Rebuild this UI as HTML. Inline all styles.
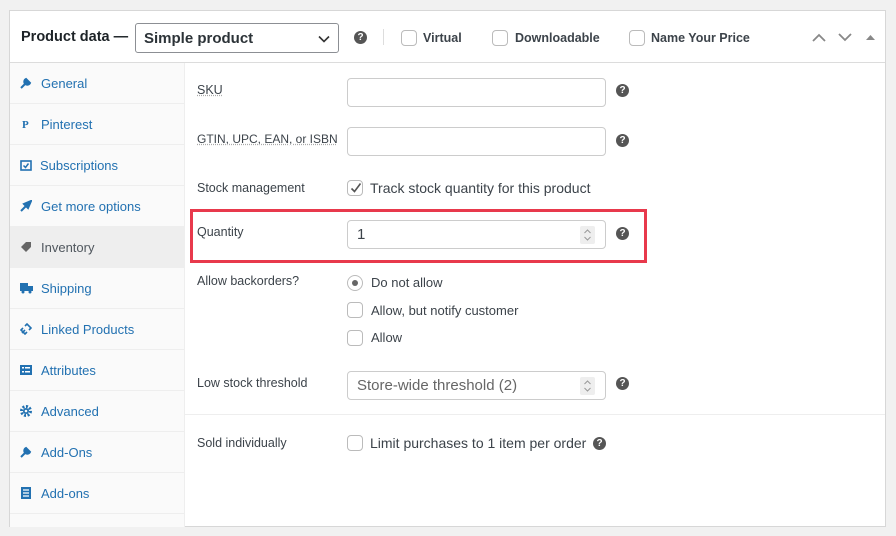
<!DOCTYPE html>
<html><head><style>
*{box-sizing:border-box;margin:0;padding:0}
body{width:896px;height:536px;background:#f1f1f1;font-family:"Liberation Sans",sans-serif;position:relative;overflow:hidden;color:#3c434a}
.panel{position:absolute;left:9px;top:10px;width:877px;height:517px;background:#fff;border:1px solid #d7d7d7}
.hdr{position:absolute;left:0;top:0;width:100%;height:52px;border-bottom:1px solid #dcdcdc}
.abs{position:absolute}
.side{position:absolute;left:0;top:52px;width:175px;height:464px;background:#fafafa;border-right:1px solid #eee}
.tab{position:absolute;left:0;width:174px;height:41px;border-bottom:1px solid #eee;color:#2271b1;font-size:13px;line-height:41px;padding-left:31px}
.tab.act{background:#eee;color:#50575e}
.tab svg{position:absolute;left:10px;top:14px}
.lbl{position:absolute;left:197px;font-size:12.5px;color:#3c434a}
.inp{position:absolute;left:347px;width:259px;height:29px;border:1px solid #ccc;border-radius:4px;background:#fff;font-size:15px;line-height:27px;padding-left:9px}
.q{position:absolute;width:13px;height:13px;border-radius:50%;background:#555;color:#fff;font-size:10px;font-weight:bold;text-align:center;line-height:13px}
.cb{position:absolute;width:16px;height:16px;border:1px solid #bbb;border-radius:4px;background:#fff}
.ct{position:absolute;font-size:14px;color:#3c434a}
.spin{position:absolute;right:10px;top:5px;width:15px;height:18px;background:#eee;border-radius:2px}
</style></head><body>
<div class="panel">
 <div class="hdr">
  <div class="abs" style="left:11px;top:18px;font-size:14.5px;font-weight:bold;color:#1d2327">Product data —</div>
  <div class="abs" style="left:125px;top:12px;width:204px;height:30px;border:1px solid #8c8f94;border-radius:3px;font-size:15px;line-height:29px;padding-left:8px;color:#2c3338;font-weight:bold;-webkit-text-stroke:0">Simple product
   <svg class="abs" style="right:8px;top:11px" width="12" height="8"><path d="M1 1.5l5 5 5-5" stroke="#333" stroke-width="1.6" fill="none"/></svg></div>
  <div class="q" style="left:344px;top:20px">?</div>
  <div class="abs" style="left:373px;top:18px;width:1px;height:16px;background:#ddd"></div>
  <div class="cb" style="left:391px;top:19px"></div><div class="ct" style="left:413px;top:20px;font-weight:bold;font-size:12.5px">Virtual</div>
  <div class="cb" style="left:482px;top:19px"></div><div class="ct" style="left:505px;top:20px;font-weight:bold;font-size:12.5px">Downloadable</div>
  <div class="cb" style="left:619px;top:19px"></div><div class="ct" style="left:641px;top:20px;font-weight:bold;font-size:12.5px">Name Your Price</div>
  <svg class="abs" style="left:802px;top:22px" width="14" height="9"><path d="M1 8l6-6 6 6" stroke="#888" stroke-width="1.8" fill="none"/></svg>
  <svg class="abs" style="left:828px;top:22px" width="14" height="9"><path d="M1 1l6 6 6-6" stroke="#888" stroke-width="1.8" fill="none"/></svg>
  <svg class="abs" style="left:856px;top:23px" width="9" height="6"><path d="M0 6l4.5-5 4.5 5z" fill="#888"/></svg>
 </div>
 <div class="side">
  <div class="tab" style="top:0"><svg width="12" height="12"><path d="M1 11l6-6M6 2a3 3 0 104 4l-2-2z" stroke="#2271b1" stroke-width="2" fill="#2271b1"/></svg>General</div>
  <div class="tab" style="top:41px"><svg width="12" height="12"><text x="2" y="10" font-size="11" font-weight="bold" fill="#2271b1" font-family="Liberation Serif">P</text></svg>Pinterest</div>
  <div class="tab" style="top:82px;padding-left:30px"><svg width="12" height="12"><rect x="1" y="2" width="10" height="9" stroke="#2271b1" stroke-width="1.6" fill="none"/><path d="M3.5 6.5l2 2 3-4" stroke="#2271b1" stroke-width="1.5" fill="none"/></svg>Subscriptions</div>
  <div class="tab" style="top:123px"><svg width="12" height="12"><path d="M1 11l5-5M4 4l4 4 3-7z" stroke="#2271b1" stroke-width="2" fill="#2271b1"/></svg>Get more options</div>
  <div class="tab act" style="top:164px"><svg width="12" height="12"><path d="M1 6l5-5h5v5l-5 5z" fill="#666"/></svg>Inventory</div>
  <div class="tab" style="top:205px"><svg width="13" height="12"><rect x="0" y="1" width="8" height="8" fill="#2271b1"/><rect x="8" y="4" width="5" height="5" fill="#2271b1"/><circle cx="3" cy="10" r="1.5" fill="#2271b1"/><circle cx="10" cy="10" r="1.5" fill="#2271b1"/></svg>Shipping</div>
  <div class="tab" style="top:246px"><svg width="12" height="12"><path d="M2 10l3-3M5 3l2-2 4 4-2 2M3 5L1 7l4 4 2-2" stroke="#2271b1" stroke-width="1.6" fill="none"/></svg>Linked Products</div>
  <div class="tab" style="top:287px"><svg width="12" height="12"><rect x="0" y="1" width="12" height="10" fill="#2271b1"/><rect x="2" y="3" width="2" height="1.5" fill="#fff"/><rect x="5" y="3" width="5" height="1.5" fill="#fff"/><rect x="2" y="7" width="2" height="1.5" fill="#fff"/><rect x="5" y="7" width="5" height="1.5" fill="#fff"/></svg>Attributes</div>
  <div class="tab" style="top:328px"><svg width="12" height="12"><circle cx="6" cy="6" r="4.5" stroke="#2271b1" stroke-width="3" stroke-dasharray="2 1.5" fill="none"/><circle cx="6" cy="6" r="3" fill="#2271b1"/><circle cx="6" cy="6" r="1.3" fill="#fafafa"/></svg>Advanced</div>
  <div class="tab" style="top:369px"><svg width="12" height="12"><path d="M1 11l6-6M6 2a3 3 0 104 4l-2-2z" stroke="#2271b1" stroke-width="2" fill="#2271b1"/></svg>Add-Ons</div>
  <div class="tab" style="top:410px"><svg width="12" height="12"><rect x="1" y="0" width="10" height="12" fill="#2271b1"/><path d="M3 3h6M3 6h6M3 9h6" stroke="#fff" stroke-width="1.2"/></svg>Add-ons</div>
 </div>
</div>
<div class="lbl" style="top:83px;text-decoration:underline dotted;text-decoration-color:#aaa">SKU</div>
<div class="inp" style="top:78px"></div><div class="q" style="left:616px;top:84px">?</div>
<div class="lbl" style="top:132px;font-size:12px;text-decoration:underline dotted;text-decoration-color:#aaa">GTIN, UPC, EAN, or ISBN</div>
<div class="inp" style="top:127px"></div><div class="q" style="left:616px;top:134px">?</div>
<div class="lbl" style="top:181px">Stock management</div>
<div class="cb" style="left:347px;top:180px"><svg class="abs" style="left:2px;top:1px" width="12" height="12"><path d="M1.5 6.5l3 3 6-8" stroke="#555" stroke-width="1.6" fill="none"/></svg></div>
<div class="ct" style="left:370px;top:180px">Track stock quantity for this product</div>
<div class="abs" style="left:190px;top:209px;width:457px;height:54px;border:3px solid #e8394c"></div>
<div class="lbl" style="top:225px">Quantity</div>
<div class="inp" style="top:220px">1<div class="spin"><svg width="15" height="18"><path d="M4.5 7l3-3 3 3M4.5 11l3 3 3-3" stroke="#999" fill="none"/></svg></div></div>
<div class="q" style="left:616px;top:227px">?</div>
<div class="lbl" style="top:274px">Allow backorders?</div>
<div class="cb" style="left:347px;top:275px;border-radius:50%"><div class="abs" style="left:4px;top:4px;width:6px;height:6px;border-radius:50%;background:#666"></div></div>
<div class="ct" style="left:371px;top:275px;font-size:13px">Do not allow</div>
<div class="cb" style="left:347px;top:302px"></div><div class="ct" style="left:371px;top:303px;font-size:13px">Allow, but notify customer</div>
<div class="cb" style="left:347px;top:330px"></div><div class="ct" style="left:371px;top:330px;font-size:13px">Allow</div>
<div class="lbl" style="top:376px">Low stock threshold</div>
<div class="inp" style="top:371px;color:#666">Store-wide threshold (2)<div class="spin"><svg width="15" height="18"><path d="M4.5 7l3-3 3 3M4.5 11l3 3 3-3" stroke="#999" fill="none"/></svg></div></div>
<div class="q" style="left:616px;top:377px">?</div>
<div class="abs" style="left:185px;top:414px;width:700px;height:1px;background:#eee"></div>
<div class="lbl" style="top:436px">Sold individually</div>
<div class="cb" style="left:347px;top:435px"></div><div class="ct" style="left:370px;top:435px">Limit purchases to 1 item per order</div>
<div class="q" style="left:593px;top:437px">?</div>
</body></html>
